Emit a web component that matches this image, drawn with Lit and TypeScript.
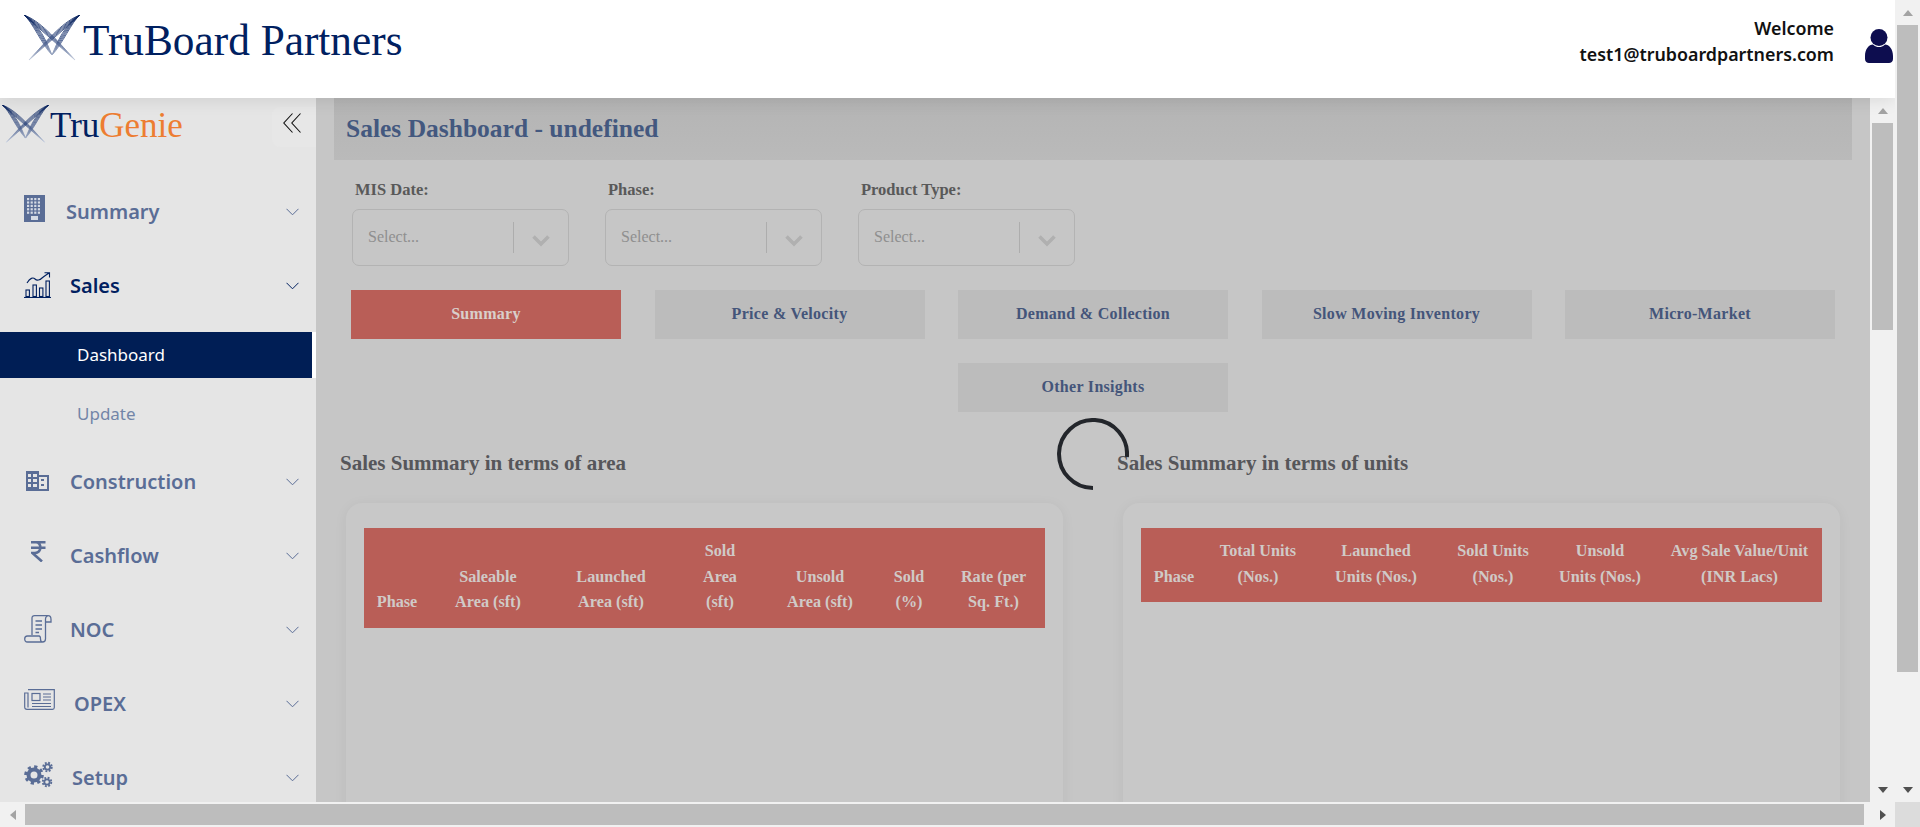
import {css, html, LitElement, svg} from "lit";
import {customElement} from "lit/decorators.js";

interface NavItem {
  label: string;
  icon: string;
  textX: number; // where the label starts, from the sidebar edge
  active?: boolean;
}

interface Column {
  lines: string[];
  width: number;
}

const NAV_TOP: NavItem[] = [
  {label: "Summary", icon: "building", textX: 66},
  {label: "Sales", icon: "chart", textX: 70, active: true},
];

const NAV_BOTTOM: NavItem[] = [
  {label: "Construction", icon: "office", textX: 70},
  {label: "Cashflow", icon: "rupee", textX: 70},
  {label: "NOC", icon: "scroll", textX: 70},
  {label: "OPEX", icon: "news", textX: 74},
  {label: "Setup", icon: "gears", textX: 72},
];

const FILTERS = ["MIS Date:", "Phase:", "Product Type:"];

const TABS = [
  "Summary",
  "Price & Velocity",
  "Demand & Collection",
  "Slow Moving Inventory",
  "Micro-Market",
  "Other Insights",
];

const AREA_COLUMNS: Column[] = [
  {lines: ["Phase"], width: 66},
  {lines: ["Saleable", "Area (sft)"], width: 116},
  {lines: ["Launched", "Area (sft)"], width: 130},
  {lines: ["Sold", "Area", "(sft)"], width: 88},
  {lines: ["Unsold", "Area (sft)"], width: 112},
  {lines: ["Sold", "(%)"], width: 66},
  {lines: ["Rate (per", "Sq. Ft.)"], width: 103},
];

const UNIT_COLUMNS: Column[] = [
  {lines: ["Phase"], width: 66},
  {lines: ["Total Units", "(Nos.)"], width: 102},
  {lines: ["Launched", "Units (Nos.)"], width: 134},
  {lines: ["Sold Units", "(Nos.)"], width: 100},
  {lines: ["Unsold", "Units (Nos.)"], width: 114},
  {lines: ["Avg Sale Value/Unit", "(INR Lacs)"], width: 165},
];

function logoMark(id: string, width: number, height: number) {
  const fan = [0, 1, 2, 3, 4];
  const wing = fan.map(
    (k) => svg`
      <path d="M0 0C16 ${6 + k * 2} ${30 + k} ${22 + k * 2} 51 45"/>
      <path d="M0 0C${8 + k * 2} ${6 + k} ${18 + k} ${30 - k} 28 40"/>
    `
  );
  return html`
    <svg class="mark" width=${width} height=${height} viewBox="0 0 56 46">
      <defs>
        <linearGradient id=${id} gradientUnits="userSpaceOnUse" x1="0" y1="0" x2="0" y2="46">
          <stop offset="0" stop-color="#0b2560"/>
          <stop offset="0.55" stop-color="#31497f"/>
          <stop offset="1" stop-color="#d5dbe6"/>
        </linearGradient>
      </defs>
      <g fill="none" stroke="url(#${id})" stroke-width="0.8">
        ${wing}
        <g transform="translate(56 0) scale(-1 1)">${wing}</g>
      </g>
    </svg>
  `;
}

function navIcon(name: string) {
  switch (name) {
    case "building":
      return html`
        <svg class="icon" style="margin-top:-6px" width="21" height="27" viewBox="0 0 21 27">
          <rect width="21" height="27" fill="currentColor"/>
          <g fill="#d5dae4">
            ${[3, 6.4, 9.8, 13.2, 16.6].map(
              (y) => svg`${[3, 6.6, 10.2, 13.8].map(
                (x) => svg`<rect x=${x} y=${y} width="2.2" height="2.2"/>`
              )}`
            )}
            <rect x="7" y="21" width="7" height="4"/>
          </g>
        </svg>`;
    case "chart":
      return html`
        <svg class="icon" width="27" height="26" viewBox="0 0 27 26" fill="none" stroke="currentColor" stroke-width="1.1">
          <path d="M0 25.5H27"/>
          <rect x="2" y="18" width="3.4" height="6.5"/>
          <rect x="9" y="13" width="3.4" height="11.5"/>
          <rect x="15.5" y="16" width="3.4" height="8.5"/>
          <rect x="22" y="9" width="3.4" height="15.5"/>
          <path d="M3 11C6 6 9 5 11 7S16 8 18 6 22 3 25 1M20.5 .8H25.5V5.5"/>
        </svg>`;
    case "office":
      return html`
        <svg class="icon" style="margin-left:2px" width="23" height="20" viewBox="0 0 23 20">
          <path fill="currentColor" fill-rule="evenodd" d="M0 0H13V4H23V20H0ZM2 3V6H5V3ZM7 3V6H11V3ZM2 8V11H5V8ZM7 8V11H11V8ZM2 13V16H5V13ZM7 13V16H11V13ZM13 6V18H21V6ZM15 8H18V10H15ZM15 13H18V15H15Z"/>
        </svg>`;
    case "rupee":
      return html`
        <svg class="icon" style="margin:-8px 0 0 7px" width="15" height="21" viewBox="0 0 15 21" fill="none" stroke="currentColor" stroke-width="2.6">
          <path d="M0 1.3H14.5M0 6.8H14.5M1 1.3H5C11 1.3 11 12 4 12H1.5L11 20.5"/>
        </svg>`;
    case "scroll":
      return html`
        <svg class="icon" width="28" height="28" viewBox="0 0 28 28" fill="none" stroke="currentColor" stroke-width="1.3">
          <path d="M8 20V3C8 1.5 9 .7 10.5 .7H24C26 .7 27 2.5 27 4.5V7H21.5"/>
          <path d="M21.5 4V24C21.5 26 20 27 18.5 27H3.5C1.5 27 .7 25.5 .7 24S1.5 21 3.5 21H15C16 21 16.5 22 16.5 24S17.5 27 18.5 27"/>
          <path d="M11.5 6H18M11.5 10H18M11.5 14H18M11.5 17.5H15"/>
          <path d="M21.5 4C21.5 2 23 .7 24 .7"/>
        </svg>`;
    case "news":
      return html`
        <svg class="icon" style="margin-top:-8px" width="31" height="21" viewBox="0 0 31 21" fill="none" stroke="currentColor" stroke-width="1.2">
          <path d="M4 .7H30.3V18.5C30.3 19.5 29.5 20.3 28.5 20.3H3C1.5 20.3 .7 19.5 .7 18V4H4V18.5"/>
          <rect x="8" y="4.5" width="8" height="7"/>
          <path d="M19 5H27M19 8H27M19 11H27M8 14.5H27M8 17.5H27"/>
        </svg>`;
    default:
      return html`
        <svg class="icon" style="margin-top:-6px" width="29" height="27" viewBox="0 0 29 27" fill="none" stroke="currentColor">
          <circle cx="10" cy="14" r="5.5" stroke-width="4"/>
          <circle cx="10" cy="14" r="8.3" stroke-width="3" stroke-dasharray="3.2 3.3"/>
          <circle cx="23.5" cy="6" r="2.7" stroke-width="1.8"/>
          <circle cx="23.5" cy="6" r="4.3" stroke-width="1.8" stroke-dasharray="1.9 1.5"/>
          <circle cx="23" cy="21" r="2.7" stroke-width="1.8"/>
          <circle cx="23" cy="21" r="4.3" stroke-width="1.8" stroke-dasharray="1.9 1.5"/>
        </svg>`;
  }
}

@customElement("app-root")
export class AppRoot extends LitElement {
  static styles = css`
    :host {
      display: block;
      width: 1920px;
      height: 827px;
      overflow: hidden;
      font-family: "Liberation Serif", serif;
    }

    .frame {
      display: grid;
      grid-template-columns: 1895px 25px;
      grid-template-rows: 802px 25px;
      height: 100%;
    }

    .viewport {
      display: flex;
      flex-direction: column;
      min-height: 0;
      overflow: hidden;
    }

    /* header */
    .header {
      flex: 0 0 98px;
      display: flex;
      position: relative;
      z-index: 2;
      background: #fff;
      box-shadow: 0 2px 16px rgba(0, 0, 0, 0.1);
      padding-left: 24px;
    }

    .brand {
      display: flex;
      align-items: flex-start;
      padding-top: 15px;
      color: #002060;
    }

    .brand-name {
      font-size: 43.3px;
      line-height: 48px;
      margin: 1px 0 0 3px;
      white-space: nowrap;
    }

    .user {
      margin-left: auto;
      display: flex;
      color: #111;
    }

    .user-text {
      padding-top: 15px;
      text-align: right;
      font: 600 17.85px/26px "Noto Sans", sans-serif;
    }

    .user-icon {
      margin: 29px 2px 0 31px;
    }

    /* sidebar */
    .body {
      flex: 1;
      display: flex;
      min-height: 0;
    }

    .sidebar {
      flex: 0 0 316px;
      background: #e5e5e5;
      overflow: hidden;
      color: #5a6d96;
      font-family: "Noto Sans", sans-serif;
    }

    .side-top {
      height: 76px;
      display: flex;
      align-items: flex-start;
      justify-content: space-between;
      padding: 7px 0 0 2px;
      box-sizing: border-box;
    }

    .side-brand {
      display: flex;
      font-family: "Liberation Serif", serif;
      font-size: 35px;
      line-height: 38px;
      color: #002060;
    }

    .side-brand span {
      margin: 2px 0 0 1px;
    }

    .side-brand b {
      font-weight: 400;
      color: #ed7d31;
    }

    .collapse {
      width: 44px;
      height: 40px;
      margin-top: 2px;
      display: flex;
      align-items: flex-start;
      padding: 6px 0 0 11px;
      box-sizing: border-box;
      background: #e7e7e7;
      border-radius: 8px 0 0 8px;
    }

    .nav-item {
      height: 74px;
      display: flex;
      align-items: center;
      padding: 0 17px 0 24px;
      font-size: 20px;
      font-weight: 600;
      box-sizing: border-box;
      position: relative;
    }

    .nav-item.active {
      color: #002060;
    }

    .icon-slot {
      display: flex;
      flex: none;
    }

    .nav-label {
      flex: 1;
    }

    .chevron {
      margin-top: 2px;
    }

    .sub {
      padding: 10px 0 8px;
      font-size: 17px;
      display: flex;
      flex-direction: column;
      gap: 12px;
    }

    .sub-item {
      height: 46px;
      display: flex;
      align-items: center;
      padding-left: 77px;
      color: #7385a8;
    }

    .sub-item.current {
      padding-bottom: 2px;
      box-sizing: border-box;
      background: #001e55;
      border-right: 4px solid #fff;
      color: #fff;
    }

    /* content */
    .content {
      flex: 1;
      position: relative;
      background: #c6c6c6;
      overflow: hidden;
      min-width: 0;
    }

    .title-bar {
      margin: 0 18px;
      height: 62px;
      padding-left: 12px;
      display: flex;
      align-items: center;
      background: linear-gradient(#b4b4b4, #bababa);
      color: #43587f;
      font-size: 25.5px;
      font-weight: 700;
    }

    .filters {
      display: flex;
      gap: 36px;
      margin: 20px 0 0 36px;
    }

    .filter-label {
      height: 20px;
      padding-left: 3px;
      margin-bottom: 9px;
      font-size: 16.5px;
      line-height: 20px;
      font-weight: 700;
      color: #595959;
    }

    .select {
      width: 217px;
      height: 57px;
      box-sizing: border-box;
      display: flex;
      align-items: center;
      border: 1.5px solid #b3b3b3;
      border-radius: 7px;
      padding-left: 15px;
      color: #8f8f8f;
      font-size: 16px;
    }

    .select span {
      flex: 1;
      margin-top: -1px;
    }

    .divider {
      width: 1px;
      height: 31px;
      background: #adadad;
    }

    .arrow-box {
      width: 54px;
      display: flex;
      justify-content: center;
      padding-top: 6px;
    }

    .tabs {
      display: flex;
      flex-wrap: wrap;
      justify-content: center;
      gap: 24px 33.5px;
      width: 1484px;
      margin: 24px 0 0 35px;
    }

    .tab {
      width: 270px;
      height: 49px;
      display: flex;
      align-items: center;
      justify-content: center;
      padding-bottom: 2px;
      box-sizing: border-box;
      background: #bcbcbc;
      color: #44557a;
      font-size: 16px;
      font-weight: 700;
      letter-spacing: 0.3px;
    }

    .tab.on {
      background: #b95e57;
      color: #d9cfca;
    }

    .sections {
      display: grid;
      grid-template-columns: 777px 777px;
      padding-left: 24px;
      margin-top: 38px;
    }

    .section-title {
      height: 26px;
      line-height: 26px;
      font-size: 21px;
      font-weight: 700;
      color: #56565a;
    }

    .card {
      width: 717px;
      height: 400px;
      margin: 27px 0 0 6px;
      padding: 25px 18px 0;
      box-sizing: border-box;
      background: #c8c8c8;
      border-radius: 16px;
      box-shadow: 0 2px 14px rgba(0, 0, 0, 0.05);
    }

    table {
      table-layout: fixed;
      width: 681px;
      border-collapse: collapse;
    }

    th {
      padding: 11px 0 12px;
      background: #b95e57;
      color: #d0cac7;
      font-size: 16.2px;
      line-height: 25.5px;
      font-weight: 700;
      vertical-align: bottom;
      text-align: center;
    }

    .spinner {
      position: absolute;
      left: 741px;
      top: 320px;
    }

    /* scrollbars */
    .vbar {
      display: flex;
      flex-direction: column;
      align-items: center;
      background: #f1f1f1;
    }

    .inner-bar {
      flex: 0 0 25px;
    }

    .btn {
      flex: none;
      width: 25px;
      height: 25px;
      display: flex;
      align-items: center;
      justify-content: center;
    }

    .tri {
      width: 0;
      height: 0;
      border: 5.5px solid transparent;
    }

    .tri.up {
      border-top: 0;
      border-bottom: 6px solid #a3a3a3;
    }

    .tri.down {
      border-bottom: 0;
      border-top: 6px solid #505050;
    }

    .tri.left {
      border-left: 0;
      border-right: 6px solid #a3a3a3;
    }

    .tri.right {
      border-right: 0;
      border-left: 6px solid #505050;
    }

    .thumb {
      width: 21px;
      background: #bdbdbd;
    }

    .outer-thumb {
      height: 647px;
    }

    .inner-thumb {
      height: 207px;
    }

    .spacer {
      flex: 1;
    }

    .hbar {
      display: flex;
      align-items: center;
      background: #f1f1f1;
    }

    .hthumb {
      width: 1839px;
      height: 21px;
      background: #bdbdbd;
    }

    .corner {
      background: #dcdcdc;
    }
  `;

  private renderNavItem(item: NavItem) {
    return html`
      <div class="nav-item ${item.active ? "active" : ""}">
        <div class="icon-slot" style="width: ${item.textX - 24}px">${navIcon(item.icon)}</div>
        <div class="nav-label">${item.label}</div>
        <svg class="chevron" width="13" height="8" viewBox="0 0 13 8" fill="none" stroke="currentColor" stroke-width="1">
          <path d="M.5 .8 6.5 6.8 12.5 .8"/>
        </svg>
      </div>
    `;
  }

  private renderTable(columns: Column[]) {
    return html`
      <table>
        <colgroup>
          ${columns.map((c) => html`<col style="width: ${c.width}px"/>`)}
        </colgroup>
        <tr>
          ${columns.map(
            (c) => html`<th>${c.lines.map((l, i) => html`${i ? html`<br/>` : ""}${l}`)}</th>`
          )}
        </tr>
      </table>
    `;
  }

  render() {
    return html`
      <div class="frame">
        <div class="viewport">
          <div class="header">
            <div class="brand">
              ${logoMark("mark-a", 56, 46)}
              <div class="brand-name">TruBoard Partners</div>
            </div>
            <div class="user">
              <div class="user-text">Welcome<br/>test1@truboardpartners.com</div>
              <svg class="user-icon" width="28" height="34" viewBox="0 0 28 34" fill="#0d0d4f">
                <circle cx="14" cy="8.5" r="8.5"/>
                <path d="M0 27C0 20 4 15.5 8 15.5 10 17.5 12 18 14 18S18 17.5 20 15.5C24 15.5 28 20 28 27V30C28 32.5 26 34 24 34H4C2 34 0 32.5 0 30Z"/>
              </svg>
            </div>
          </div>

          <div class="body">
            <div class="sidebar">
              <div class="side-top">
                <div class="side-brand">
                  ${logoMark("mark-b", 47, 38)}
                  <span>Tru<b>Genie</b></span>
                </div>
                <div class="collapse">
                  <svg width="18" height="20" viewBox="0 0 18 20" fill="none" stroke="#111" stroke-width="1.1">
                    <path d="M9.5 .5 .8 10 9.5 19.5M17.5 .5 8.8 10 17.5 19.5"/>
                  </svg>
                </div>
              </div>
              ${NAV_TOP.map((i) => this.renderNavItem(i))}
              <div class="sub">
                <div class="sub-item current">Dashboard</div>
                <div class="sub-item">Update</div>
              </div>
              ${NAV_BOTTOM.map((i) => this.renderNavItem(i))}
            </div>

            <div class="content">
              <div class="title-bar">Sales Dashboard - undefined</div>
              <div class="filters">
                ${FILTERS.map(
                  (f) => html`
                    <div>
                      <div class="filter-label">${f}</div>
                      <div class="select">
                        <span>Select...</span>
                        <div class="divider"></div>
                        <div class="arrow-box">
                          <svg width="18" height="12" viewBox="0 0 18 12" fill="none" stroke="#b0b0b0" stroke-width="3.6">
                            <path d="M1.5 1.5 9 9 16.5 1.5"/>
                          </svg>
                        </div>
                      </div>
                    </div>
                  `
                )}
              </div>
              <div class="tabs">
                ${TABS.map((t, i) => html`<div class="tab ${i === 0 ? "on" : ""}">${t}</div>`)}
              </div>
              <div class="sections">
                <div>
                  <div class="section-title">Sales Summary in terms of area</div>
                  <div class="card">${this.renderTable(AREA_COLUMNS)}</div>
                </div>
                <div>
                  <div class="section-title">Sales Summary in terms of units</div>
                  <div class="card">${this.renderTable(UNIT_COLUMNS)}</div>
                </div>
              </div>
              <svg class="spinner" width="72" height="72" viewBox="0 0 72 72" fill="none" stroke="#23262b" stroke-width="4">
                <path d="M36 70A34 34 0 1 1 69.9 39"/>
              </svg>
            </div>

            <div class="vbar inner-bar">
              <div class="btn"><div class="tri up"></div></div>
              <div class="thumb inner-thumb"></div>
              <div class="spacer"></div>
              <div class="btn"><div class="tri down"></div></div>
            </div>
          </div>
        </div>

        <div class="vbar">
          <div class="btn"><div class="tri up"></div></div>
          <div class="thumb outer-thumb"></div>
          <div class="spacer"></div>
          <div class="btn"><div class="tri down"></div></div>
        </div>

        <div class="hbar">
          <div class="btn"><div class="tri left"></div></div>
          <div class="hthumb"></div>
          <div class="spacer"></div>
          <div class="btn"><div class="tri right"></div></div>
        </div>
        <div class="corner"></div>
      </div>
    `;
  }
}
